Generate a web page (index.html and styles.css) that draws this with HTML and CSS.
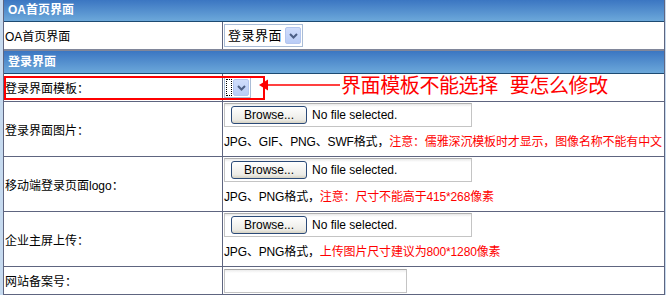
FILE: index.html
```html
<!DOCTYPE html>
<html lang="zh-CN">
<head>
  <meta charset="UTF-8"/>
  <title>OA首页界面</title>
  <link rel="stylesheet" href="styles.css">
</head>
<body>
<div class="page">

  <div class="panel">
    <!-- OA home -->
    <div class="head">OA首页界面</div>
    <div class="row row-first">
      <div class="label">OA首页界面</div>
      <div class="field">
        <div class="select"><span class="select-text">登录界面</span><i class="drop"><svg width="9" height="6" viewBox="0 0 9 6"><path d="M1 1l3.5 3.5L8 1" fill="none" stroke="#4d5f86" stroke-width="2"/></svg></i></div>
      </div>
    </div>

    <!-- login page -->
    <div class="head head-second">登录界面</div>
    <div class="row">
      <div class="label">登录界面模板：</div>
      <div class="field">
        <div class="select select-empty"><span class="focus"></span><i class="drop"><svg width="9" height="6" viewBox="0 0 9 6"><path d="M1 1l3.5 3.5L8 1" fill="none" stroke="#4d5f86" stroke-width="2"/></svg></i></div>
      </div>
    </div>

    <div class="row row-tall">
      <div class="label">登录界面图片：</div>
      <div class="field field-file">
        <div class="file"><button class="browse">Browse...</button><span class="file-name">No file selected.</span></div>
        <div class="hint">JPG、GIF、PNG、SWF格式，<span class="warn">注意：儒雅深沉模板时才显示，图像名称不能有中文</span></div>
      </div>
    </div>

    <div class="row row-tall">
      <div class="label">移动端登录页面logo：</div>
      <div class="field field-file">
        <div class="file"><button class="browse">Browse...</button><span class="file-name">No file selected.</span></div>
        <div class="hint">JPG、PNG格式，<span class="warn">注意：尺寸不能高于415*268像素</span></div>
      </div>
    </div>

    <div class="row row-tall">
      <div class="label">企业主屏上传：</div>
      <div class="field field-file">
        <div class="file"><button class="browse">Browse...</button><span class="file-name">No file selected.</span></div>
        <div class="hint">JPG、PNG格式，<span class="warn">上传图片尺寸建议为800*1280像素</span></div>
      </div>
    </div>

    <div class="row">
      <div class="label">网站备案号：</div>
      <div class="field">
        <input class="text" type="text">
      </div>
    </div>
  </div>

  <!-- annotation -->
  <div class="mark-box"></div>
  <svg class="mark-arrow" width="82" height="14" viewBox="0 0 82 14"><path d="M1 7L10 1.5V12.5Z" fill="#f00"/><path d="M9 7H82" stroke="#f00" stroke-width="1.5"/></svg>
  <div class="mark-text">界面模板不能选择<span class="gap"></span>要怎么修改</div>

</div>
</body>
</html>
```

FILE: styles.css
```css
*{box-sizing:border-box}
html,body{margin:0;background:#c6daef}
body{font:12px "Liberation Sans","Noto Sans CJK SC",sans-serif;color:#000}
.page{position:relative;width:666px;height:295px;overflow:hidden}

.panel{margin-left:3px;width:662px;background:#fff;border-left:1px solid #5e6580;border-right:1px solid #5e6580}
.head{height:22px;line-height:21px;padding-left:4px;color:#fff;font-weight:bold;background:linear-gradient(#3b76c2,#6ca8da);border-bottom:1px solid #1d4a72}
.head-second{height:23px;line-height:22px}

.row{display:flex;height:28px;border-bottom:1px solid #5e6580}
.row-first{height:29px;border-bottom:2px solid #80869a}
.row-tall{height:55px}
.label{width:219px;padding-left:1px;display:flex;align-items:center;border-right:1px solid #5e6580;white-space:nowrap}
.field{flex:1;padding-left:1px;display:flex;align-items:center;min-width:0}
.field-file{flex-direction:column;align-items:flex-start;justify-content:flex-start;padding-top:1px}

.select{display:flex;align-items:center;height:23px;width:79px;border:1px solid #a9bcd6;background:#fff;padding:0 1px 0 3px}
.select-text{flex:1;font-size:13px;letter-spacing:.5px;line-height:20px}
.drop{width:16px;height:17px;display:flex;align-items:center;justify-content:center;background:linear-gradient(#d0ddfc,#b9ccf6);border:1px solid #b4c6ef;border-radius:2px}
.select-empty{width:27px;height:21px;padding:0 1px 0 1px}
.focus{width:7px;height:17px;border:1px dotted #000;margin-right:1px}
.select-empty .drop{flex:none}

.file{display:flex;align-items:center;width:248px;height:24px;border:1px solid #c4c4c4;border-top-color:#b0b0b0;background:linear-gradient(#e8e8e8 0,#fff 3px);padding-left:6px}
.browse{width:76px;height:18px;margin:0 5px 0 0;padding:0;font:12px "Liberation Sans",sans-serif;color:#000;border:1px solid #2b4a78;border-radius:3px;background:linear-gradient(#fff,#ecebe6 80%,#d6d2c2)}
.file-name{font-size:12px;white-space:nowrap}
.hint{margin-top:3px;line-height:24px;white-space:nowrap;letter-spacing:-.15px}
.warn{color:#f00}

.text{width:183px;height:24px;margin:0;border:1px solid #c4c4c4;border-top-color:#a8a8a8;background:linear-gradient(#ececec 0,#fff 3px)}

.mark-box{position:absolute;left:4px;top:76px;width:261px;height:24px;border:2px solid #f00}
.mark-arrow{position:absolute;left:258px;top:78px}
.mark-text{position:absolute;left:341px;top:75px;font-size:20px;line-height:20px;color:#f00;font-family:"Noto Sans CJK SC",sans-serif;white-space:nowrap;letter-spacing:-.4px}
.gap{display:inline-block;width:12px}
```
